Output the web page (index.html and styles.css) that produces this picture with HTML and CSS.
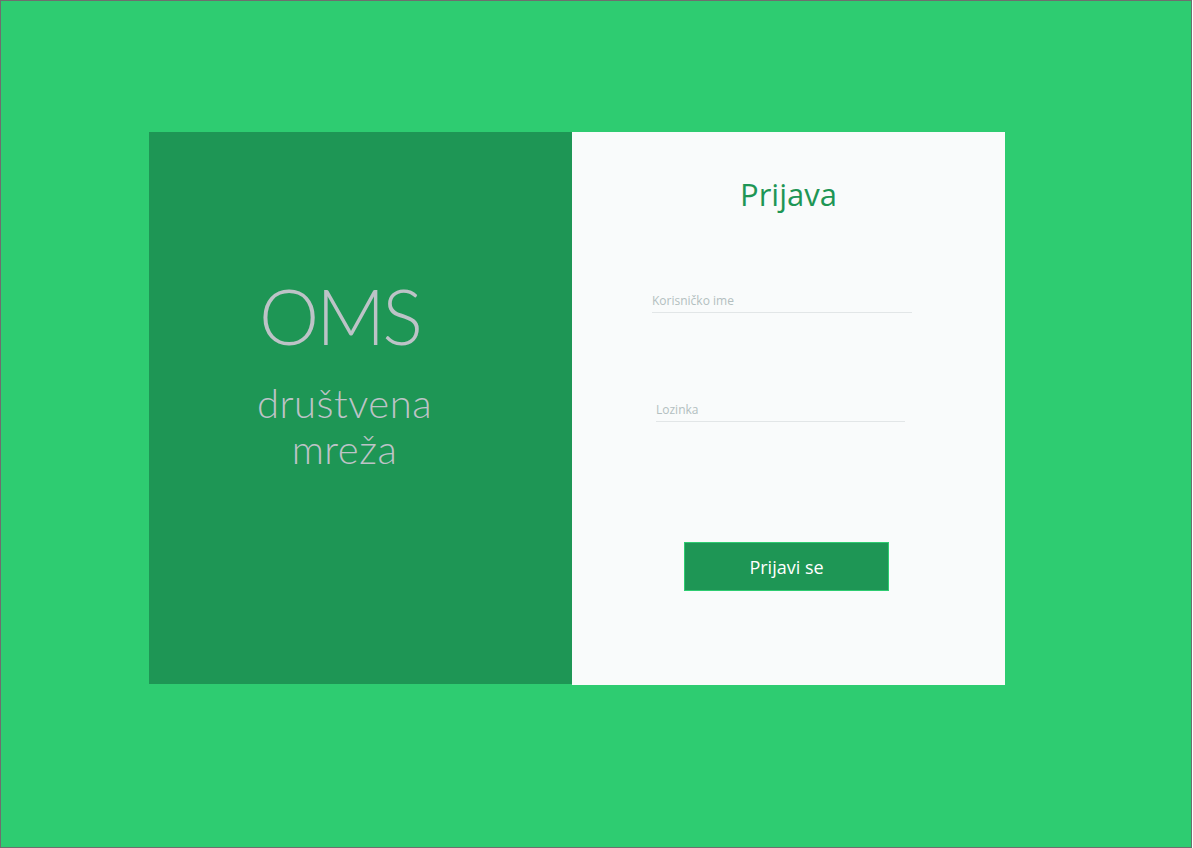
FILE: index.html
```html
<!DOCTYPE html>
<html lang="hr">
<head>
<meta charset="utf-8">
<title>OMS - Prijava</title>
<link rel="stylesheet" href="styles.css">
</head>
<body>
<div class="page">
  <div class="card">
    <div class="brand">
      <div class="brand-inner">
        <div class="logo">OMS</div>
        <div class="tagline">društvena<br>mreža</div>
      </div>
    </div>
    <div class="login">
      <h1 class="title">Prijava</h1>
      <form class="form">
        <input class="field field-user" type="text" placeholder="Korisničko ime">
        <input class="field field-pass" type="password" placeholder="Lozinka">
        <button class="btn" type="button">Prijavi se</button>
      </form>
    </div>
  </div>
</div>
</body>
</html>
```

FILE: styles.css
```css
* { box-sizing: border-box; }
html, body { margin: 0; padding: 0; }
body { background: #ffffff; }
.page {
  width: 1192px;
  height: 848px;
  border: 1px solid #6e6e6e;
  background: #2ecc71;
  padding: 131px 0 0 148px;
}
.card {
  display: flex;
  width: 856px;
  height: 553px;
}
.brand {
  width: 423px;
  background: #1e9655;
  display: flex;
  justify-content: center;
  padding-right: 32px;
  padding-top: 146px;
  height: 552px;
}
.brand-inner {
  display: flex;
  flex-direction: column;
  align-items: center;
  color: #bdc3c7;
  font-family: "Lato", "DejaVu Sans", sans-serif;
  font-weight: 300;
}
.logo {
  font-size: 76px;
  line-height: 1;
  letter-spacing: -3px;
  margin-right: 10px;
}
.tagline {
  margin-top: 26px;
  font-size: 40px;
  line-height: 46px;
  letter-spacing: 0.5px;
  text-align: center;
}
.login {
  width: 433px;
  background: #f9fbfb;
  display: flex;
  flex-direction: column;
  align-items: center;
  font-family: "Open Sans", "Noto Sans", sans-serif;
}
.title {
  margin: 40px 0 0 0;
  font-size: 31px;
  font-weight: 400;
  line-height: 44px;
  color: #1e9655;
}
.form {
  align-self: stretch;
  display: flex;
  flex-direction: column;
}
.field {
  font-family: "Open Sans", "Noto Sans", sans-serif;
  font-size: 12px;
  color: #555;
  background: transparent;
  border: none;
  border-bottom: 1px solid #e2e6e7;
  outline: none;
  padding: 0;
  height: 25px;
}
.field::placeholder { color: #b3bfc0; }
.field-user {
  margin: 72px 0 0 80px;
  width: 260px;
}
.field-pass {
  margin: 84px 0 0 84px;
  width: 249px;
}
.btn {
  margin: 120px 0 0 112px;
  width: 205px;
  height: 49px;
  background: #1e9655;
  border: 1px solid #2ecc71;
  color: #ffffff;
  font-family: "Open Sans", "Noto Sans", sans-serif;
  font-size: 18px;
  cursor: pointer;
}
```
